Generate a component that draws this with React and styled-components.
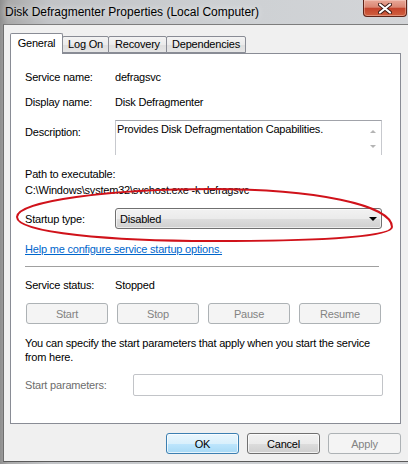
import React from "react";
import styled, { createGlobalStyle } from "styled-components";

const GlobalStyle = createGlobalStyle`
  html, body {
    margin: 0;
    padding: 0;
    background: #fff;
  }
  body {
    font-family: "Liberation Sans", Arial, sans-serif;
    font-size: 11px;
    letter-spacing: -0.2px;
    color: #000;
  }
`;

const Window = styled.div`
  position: relative;
  width: 408px;
  height: 464px;
  display: flex;
  flex-direction: column;
  overflow: hidden;
  background: linear-gradient(
    to right,
    #8f8f8f 0,
    #a9a9a9 2%,
    #c2c4c7 12%,
    #cdd0d3 55%,
    #d3d5d8 100%
  );
`;

const TitleBar = styled.div`
  height: 24px;
  flex-shrink: 0;
  display: flex;
  justify-content: space-between;
  align-items: flex-start;
`;

const Title = styled.div`
  padding: 4px 0 0 5px;
  font-size: 12px;
  letter-spacing: 0;
  line-height: 16px;
  color: #000;
  text-shadow: 0 0 6px rgba(255, 255, 255, 0.9);
`;

const CloseButton = styled.div`
  width: 44px;
  height: 17px;
  margin-right: 1px;
  box-sizing: border-box;
  border: 1px solid #5e2318;
  border-top: none;
  border-radius: 0 0 4px 4px;
  background: linear-gradient(#e9a898 0%, #da8672 45%, #c4442c 52%, #d0603f 100%);
  box-shadow: inset 0 0 0 1px rgba(255, 235, 225, 0.35);
  display: flex;
  align-items: center;
  justify-content: center;
`;

const Client = styled.div`
  flex: 1;
  margin: 0 0 2px 3px;
  padding: 8px 7px 0 6px;
  background: #f0f0f0;
  border-top: 1px solid #7d7d7d;
  border-left: 1px solid #6e6e6e;
  border-bottom: 1px solid #5a5a5a;
  display: flex;
  flex-direction: column;
`;

const TabRow = styled.div`
  display: flex;
  align-items: flex-end;
  position: relative;
  z-index: 1;
`;

const Tab = styled.div`
  box-sizing: border-box;
  width: ${(p) => p.$w}px;
  height: ${(p) => (p.$active ? 21 : 17)}px;
  margin-left: ${(p) => (p.$first ? 0 : -1)}px;
  margin-bottom: ${(p) => (p.$active ? -1 : 0)}px;
  border: 1px solid #898c95;
  border-bottom: ${(p) => (p.$active ? "none" : "1px solid #898c95")};
  border-radius: 2px 2px 0 0;
  background: ${(p) =>
    p.$active ? "#fff" : "linear-gradient(#f3f3f3 0%, #ebebeb 50%, #dedede 51%, #e5e5e5 100%)"};
  position: relative;
  z-index: ${(p) => (p.$active ? 2 : 1)};
  display: flex;
  justify-content: center;
  padding-top: ${(p) => (p.$active ? 2 : 0)}px;
  line-height: 15px;
  color: #000;
`;

const Panel = styled.div`
  box-sizing: border-box;
  width: 391px;
  height: 371px;
  border: 1px solid #898c95;
  background: #fff;
  padding-left: 14px;
  display: flex;
  flex-direction: column;
`;

const Row = styled.div`
  display: flex;
  align-items: ${(p) => (p.$top ? "flex-start" : "center")};
  height: ${(p) => p.$h || 16}px;
  margin-top: ${(p) => p.$mt || 0}px;
`;

const Label = styled.div`
  width: ${(p) => p.$w || 90}px;
  flex-shrink: 0;
  line-height: 16px;
  padding-top: ${(p) => p.$pt || 0}px;
  color: ${(p) => (p.$disabled ? "#6d6d6d" : "#000")};
`;

const Value = styled.div`
  line-height: 16px;
  white-space: nowrap;
`;

const TextBox = styled.div`
  box-sizing: border-box;
  width: 267px;
  height: 35px;
  border: 1px solid #c7c9ce;
  border-top-color: #a1a3aa;
  border-bottom: none;
  background: #fff;
  display: flex;
`;

const TextBoxText = styled.div`
  flex: 1;
  padding: 1px 0 0 1px;
  line-height: 14px;
  white-space: nowrap;
`;

const ScrollBar = styled.div`
  width: 16px;
  display: flex;
  flex-direction: column;
  justify-content: space-between;
  align-items: center;
  padding: 9px 0 7px;
`;

const Arrow = styled.div`
  width: 0;
  height: 0;
  border-left: ${(p) => p.$size}px solid transparent;
  border-right: ${(p) => p.$size}px solid transparent;
  border-bottom: ${(p) => (p.$up ? `${p.$size}px solid ${p.$color}` : "none")};
  border-top: ${(p) => (p.$up ? "none" : `${p.$size}px solid ${p.$color}`)};
`;

const Combo = styled.div`
  box-sizing: border-box;
  width: 267px;
  height: 21px;
  border: 1px solid #707070;
  border-radius: 3px;
  background: linear-gradient(#f2f2f2 0%, #ebebeb 50%, #dddddd 51%, #cfcfcf 100%);
  box-shadow: inset 0 0 0 1px rgba(255, 255, 255, 0.6);
  display: flex;
  align-items: center;
  justify-content: space-between;
  padding: 0 4px 0 4px;
`;

const Link = styled.a`
  display: block;
  margin-top: 12px;
  line-height: 16px;
  color: #0066cc;
  text-decoration: underline;
  cursor: pointer;
`;

const Separator = styled.div`
  width: 354px;
  height: 1px;
  margin-top: 9px;
  background: #a0a0a0;
`;

const ButtonRow = styled.div`
  display: flex;
  justify-content: ${(p) => p.$justify || "space-between"};
  gap: ${(p) => p.$gap || 0}px;
  width: ${(p) => (p.$w ? `${p.$w}px` : "auto")};
  margin: ${(p) => p.$margin || 0};
`;

const variants = {
  disabled: `
    border-color: #adb2b5;
    background: #f4f4f4;
    color: #838383;
  `,
  normal: `
    border-color: #707070;
    background: linear-gradient(#f2f2f2 0%, #ebebeb 50%, #dddddd 51%, #cfcfcf 100%);
    box-shadow: inset 0 0 0 1px rgba(255, 255, 255, 0.7);
    color: #000;
  `,
  default: `
    border-color: #3c7fb1;
    background: linear-gradient(#eaf6fd 0%, #d9f0fc 50%, #bee6fd 51%, #a7d9f5 100%);
    box-shadow: inset 0 0 0 1px rgba(255, 255, 255, 0.7);
    color: #000;
  `,
};

const Button = styled.div`
  box-sizing: border-box;
  width: ${(p) => p.$w}px;
  height: 21px;
  border: 1px solid;
  border-radius: 3px;
  display: flex;
  align-items: center;
  justify-content: center;
  ${(p) => variants[p.$variant]}
`;

const Paragraph = styled.p`
  margin: 12px 0 0;
  width: 362px;
  line-height: 14px;
`;

const Input = styled.div`
  box-sizing: border-box;
  width: 250px;
  height: 22px;
  border: 1px solid #c2c4c8;
  border-radius: 2px;
  background: #fff;
`;

const Overlay = styled.svg`
  position: absolute;
  left: 0;
  top: 0;
  pointer-events: none;
  z-index: 5;
`;

const CloseGlyph = () => (
  <svg width="14" height="11" viewBox="0 0 14 11">
    <path
      d="M2 1.5 L12 9.5 M12 1.5 L2 9.5"
      stroke="#3d1a14"
      strokeWidth="4"
      strokeLinecap="round"
    />
    <path
      d="M2 1.5 L12 9.5 M12 1.5 L2 9.5"
      stroke="#fff"
      strokeWidth="2.2"
      strokeLinecap="round"
    />
  </svg>
);

const tabs = [
  { label: "General", w: 53, active: true },
  { label: "Log On", w: 47 },
  { label: "Recovery", w: 59 },
  { label: "Dependencies", w: 80 },
];

const App = () => {
  return (
    <>
      <GlobalStyle />
      <Window>
        <TitleBar>
          <Title>Disk Defragmenter Properties (Local Computer)</Title>
          <CloseButton>
            <CloseGlyph />
          </CloseButton>
        </TitleBar>
        <Client>
          <TabRow>
            {tabs.map((t, i) => (
              <Tab key={t.label} $w={t.w} $active={t.active} $first={i === 0}>
                {t.label}
              </Tab>
            ))}
          </TabRow>
          <Panel>
            <Row $mt={15}>
              <Label>Service name:</Label>
              <Value>defragsvc</Value>
            </Row>
            <Row $mt={9}>
              <Label>Display name:</Label>
              <Value>Disk Defragmenter</Value>
            </Row>
            <Row $mt={10} $h={35} $top>
              <Label $pt={4}>Description:</Label>
              <TextBox>
                <TextBoxText>Provides Disk Defragmentation Capabilities.</TextBoxText>
                <ScrollBar>
                  <Arrow $up $size={3.5} $color="#b4b4b4" />
                  <Arrow $size={3.5} $color="#b4b4b4" />
                </ScrollBar>
              </TextBox>
            </Row>
            <Row $mt={11}>
              <Value>Path to executable:</Value>
            </Row>
            <Row>
              <Value>C:\Windows\system32\svchost.exe -k defragsvc</Value>
            </Row>
            <Row $mt={10} $h={21}>
              <Label>Startup type:</Label>
              <Combo>
                <span>Disabled</span>
                <Arrow $size={4} $color="#000" />
              </Combo>
            </Row>
            <Link>Help me configure service startup options.</Link>
            <Separator />
            <Row $mt={10}>
              <Label>Service status:</Label>
              <Value>Stopped</Value>
            </Row>
            <ButtonRow $w={355} $margin="10px 0 0 1px">
              <Button $w={82} $variant="disabled">Start</Button>
              <Button $w={82} $variant="disabled">Stop</Button>
              <Button $w={82} $variant="disabled">Pause</Button>
              <Button $w={82} $variant="disabled">Resume</Button>
            </ButtonRow>
            <Paragraph>
              You can specify the start parameters that apply when you start the service
              from here.
            </Paragraph>
            <Row $mt={10} $h={22}>
              <Label $w={108} $disabled>
                Start parameters:
              </Label>
              <Input />
            </Row>
          </Panel>
          <ButtonRow $justify="flex-end" $gap={8} $w={391} $margin="9px 0 0">
            <Button $w={73} $variant="default">OK</Button>
            <Button $w={73} $variant="normal">Cancel</Button>
            <Button $w={73} $variant="disabled">Apply</Button>
          </ButtonRow>
        </Client>
        <Overlay width="408" height="464" viewBox="0 0 408 464">
          <path
            d="M17 217 C17 201 110 189 212 189 C315 189 392 205 392 227 C392 238 305 241 212 241 C112 241 17 233 17 217 Z"
            fill="none"
            stroke="#d0121a"
            strokeWidth="2"
          />
        </Overlay>
      </Window>
    </>
  );
};

export default App;
